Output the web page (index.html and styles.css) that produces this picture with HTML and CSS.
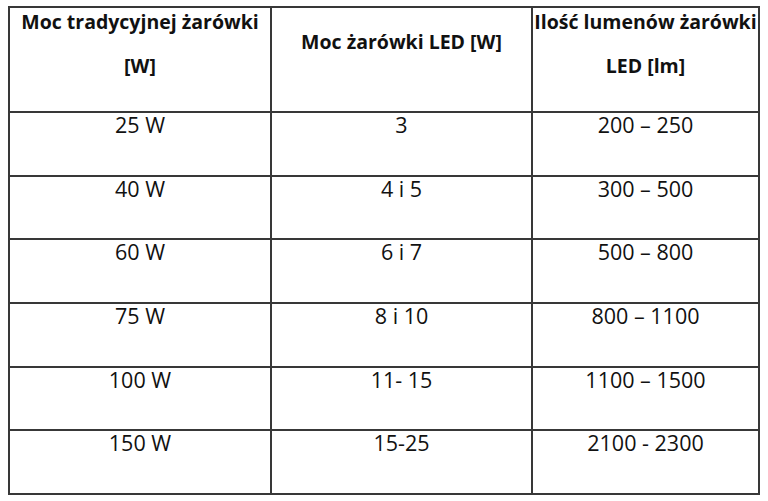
FILE: index.html
```html
<!DOCTYPE html>
<html lang="pl">
<head>
<meta charset="utf-8">
<link rel="stylesheet" href="styles.css">
</head>
<body>
<table class="tbl">
  <colgroup>
    <col class="c1"><col class="c2"><col class="c3">
  </colgroup>
  <tr class="head">
    <th><span class="hl">Moc tradycyjnej żarówki</span><span class="hl second">[W]</span></th>
    <th class="mid"><span class="hl">Moc żarówki LED [W]</span></th>
    <th><span class="hl">Ilość lumenów żarówki</span><span class="hl second">LED [lm]</span></th>
  </tr>
  <tr><td>25 W</td><td>3</td><td>200 – 250</td></tr>
  <tr><td>40 W</td><td>4 i 5</td><td>300 – 500</td></tr>
  <tr><td>60 W</td><td>6 i 7</td><td>500 – 800</td></tr>
  <tr><td>75 W</td><td>8 i 10</td><td>800 – 1100</td></tr>
  <tr><td>100 W</td><td>11- 15</td><td>1100 – 1500</td></tr>
  <tr><td>150 W</td><td>15-25</td><td>2100 - 2300</td></tr>
</table>
</body>
</html>
```
FILE: styles.css
```css
html, body {
  margin: 0;
  padding: 0;
  background: #ffffff;
}
body {
  padding: 6px 0 0 8px;
  font-family: "Open Sans", "Liberation Sans", sans-serif;
  color: #111111;
}
.tbl {
  border-collapse: collapse;
  table-layout: fixed;
  width: 750px;
}
.c1 { width: 262px; }
.c2 { width: 261px; }
.c3 { width: 227px; }
.tbl th, .tbl td {
  border: 2px solid #383838;
  text-align: center;
  vertical-align: top;
  padding: 0;
}
.head th {
  height: 105px;
  font-weight: 700;
  font-size: 19.5px;
  padding-top: 2px;
  box-sizing: border-box;
}
.hl {
  display: block;
  line-height: 24px;
  white-space: nowrap;
}
.hl.second {
  margin-top: 20px;
}
.head th.mid {
  padding-top: 22px;
}
.tbl td {
  height: 63.7px;
  font-size: 21.5px;
  line-height: 24px;
  box-sizing: border-box;
}
```
